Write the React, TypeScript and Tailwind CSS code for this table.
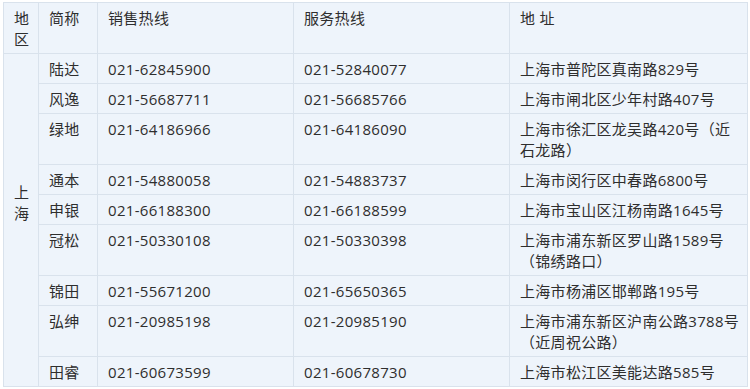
const rows = [
  { name: "陆达", sales: "021-62845900", service: "021-52840077", addr: ["上海市普陀区真南路829号"] },
  { name: "风逸", sales: "021-56687711", service: "021-56685766", addr: ["上海市闸北区少年村路407号"] },
  { name: "绿地", sales: "021-64186966", service: "021-64186090", addr: ["上海市徐汇区龙吴路420号（近", "石龙路）"] },
  { name: "通本", sales: "021-54880058", service: "021-54883737", addr: ["上海市闵行区中春路6800号"] },
  { name: "申银", sales: "021-66188300", service: "021-66188599", addr: ["上海市宝山区江杨南路1645号"] },
  { name: "冠松", sales: "021-50330108", service: "021-50330398", addr: ["上海市浦东新区罗山路1589号", "（锦绣路口）"] },
  { name: "锦田", sales: "021-55671200", service: "021-65650365", addr: ["上海市杨浦区邯郸路195号"] },
  { name: "弘绅", sales: "021-20985198", service: "021-20985190", addr: ["上海市浦东新区沪南公路3788号", "（近周祝公路）"] },
  { name: "田睿", sales: "021-60673599", service: "021-60678730", addr: ["上海市松江区美能达路585号"] },
]

const cell =
  "border border-[#d9e2ec] bg-[#eef4fb] px-[10px] pt-[5px] pb-[3px] align-top text-left font-normal whitespace-nowrap"

export default function App() {
  return (
    <div
      className="min-h-screen bg-white pl-[3px] pt-[2px] text-[15px] leading-[21px] tracking-[0.3px] text-[#2e2e2e]"
      style={{ fontFamily: '"Open Sans", "Noto Sans CJK SC", sans-serif' }}
    >
      <table className="w-[744px] table-fixed border-collapse">
        <colgroup>
          <col className="w-[35px]" />
          <col className="w-[59px]" />
          <col className="w-[196px]" />
          <col className="w-[216px]" />
          <col className="w-[238px]" />
        </colgroup>
        <thead>
          <tr>
            <th className={cell.replace("whitespace-nowrap", "whitespace-normal") + " text-center"}>地区</th>
            <th className={cell}>简称</th>
            <th className={cell}>销售热线</th>
            <th className={cell}>服务热线</th>
            <th className={cell}>地 址</th>
          </tr>
        </thead>
        <tbody>
          {rows.map((r, i) => (
            <tr key={r.name}>
              {i === 0 && (
                <td
                  rowSpan={rows.length}
                  className="border border-[#d9e2ec] bg-[#eef4fb] px-[10px] pt-[128px] align-top text-center whitespace-normal"
                >
                  上海
                </td>
              )}
              <td className={cell}>{r.name}</td>
              <td className={cell}>{r.sales}</td>
              <td className={cell}>{r.service}</td>
              <td className={cell}>
                {r.addr.map((line, j) => (
                  <div key={j}>{line}</div>
                ))}
              </td>
            </tr>
          ))}
        </tbody>
      </table>
    </div>
  )
}
